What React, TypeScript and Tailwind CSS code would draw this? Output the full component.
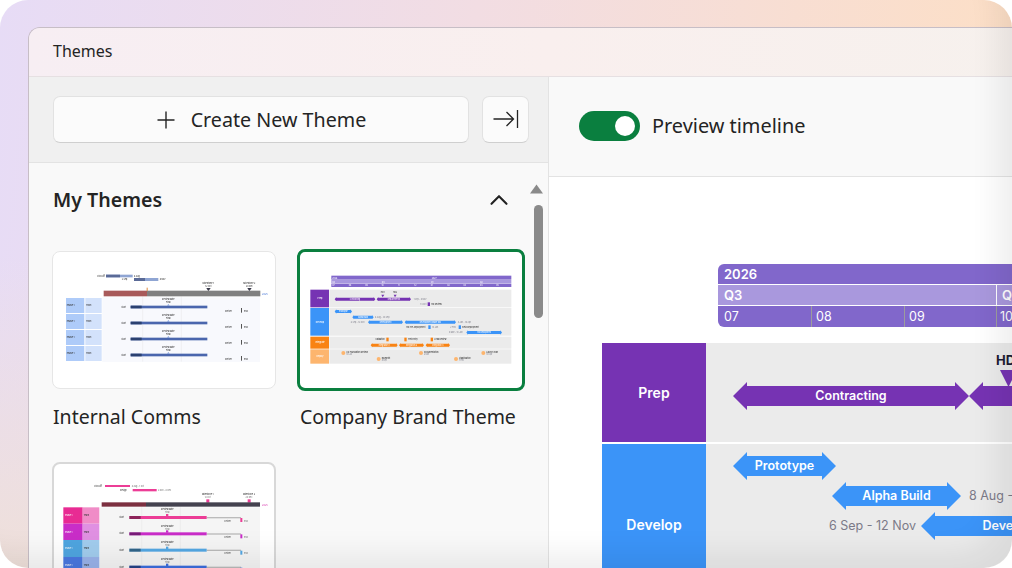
import React from "react";
import { ChevronUp } from "lucide-react";

const ui = "font-['Noto_Sans',sans-serif]";
const inter = "font-['Inter',sans-serif]";

function Arrow({ w, label, color }: { w: number; label: string; color: string }) {
  return (
    <div
      style={{ width: w }}
      className={`h-7 shrink-0 pt-px flex items-center justify-center text-white text-[12.5px] font-semibold whitespace-nowrap [clip-path:polygon(0_50%,14px_0,14px_4px,calc(100%-14px)_4px,calc(100%-14px)_0,100%_50%,calc(100%-14px)_100%,calc(100%-14px)_24px,14px_24px,14px_100%)] ${color}`}
    >
      {label}
    </div>
  );
}

function T({ x, y, s = 7, c = "#333", children, a }: { x: number; y: number; s?: number; c?: string; children: React.ReactNode; a?: "middle" | "start" | "end" }) {
  return (
    <text x={x} y={y} fontSize={s} fill={c} textAnchor={a} fontFamily="Inter, sans-serif" fontWeight={500}>
      {children}
    </text>
  );
}

function Thumb1() {
  const rows = [177, 225, 273, 321];
  return (
    <svg width="222" height="136" viewBox="39 39 666 408" className="block blur-[0.35px]">
      <rect x="187" y="175" width="473" height="194" fill="#f8f9fd" />
      <line x1="308" y1="172" x2="308" y2="368" stroke="#ddd" />
      <line x1="424" y1="172" x2="424" y2="368" stroke="#ddd" />
      <T x={172} y={114} s={6}>Kick-off</T>
      <rect x="198" y="107" width="80" height="8" fill="#8fa5d3" />
      <rect x="198" y="107" width="42" height="8" fill="#5a6a97" />
      <T x={282} y={114} s={6}>8 Aug</T>
      <T x={245} y={124} s={6}>2 Sep</T>
      <rect x="282" y="117" width="73" height="9" fill="#8fa5d3" />
      <rect x="282" y="117" width="33" height="9" fill="#5a6a97" />
      <T x={359} y={124} s={6}>8 Nov</T>
      <T x={505} y={134} s={6.5} a="middle">Milestone 1</T>
      <T x={505} y={143} s={6} a="middle">12 Oct</T>
      <T x={628} y={134} s={6.5} a="middle">Milestone 2</T>
      <T x={628} y={143} s={6} a="middle">20 Dec</T>
      <polygon points="499,147 512,147 505,157" fill="#3a3a4a" />
      <polygon points="622,147 635,147 628,157" fill="#3a3a4a" />
      <rect x="191" y="155" width="130" height="17" fill="#a85a5a" />
      <rect x="321" y="155" width="340" height="17" fill="#808080" />
      <rect x="320" y="146" width="3" height="10" fill="#e08a3c" />
      <T x={666} y={167} s={7} c="#4a78d8">2025</T>
      {rows.map((y) => (
        <g key={y}>
          <rect x="78" y={y} width="55" height={45} fill="#aecbf9" />
          <rect x="136" y={y} width="49" height={45} fill="#d3e2fb" />
          <T x={80} y={y + 24} s={6.5}>Phase 1</T>
          <T x={138} y={y + 24} s={6}>Team</T>
          <T x={385} y={y + 6} s={6.5} a="middle">Review date</T>
          <T x={385} y={y + 15} s={6} a="middle">Final</T>
          <T x={244} y={y + 29} s={6}>Start</T>
          <rect x="272" y={y + 23} width="230" height="8" fill="#4a66ad" />
          <rect x="272" y={y + 23} width="33" height="8" fill="#2b4170" />
          <polygon points={`${385},${y + 18} ${389},${y + 23} ${381},${y + 23}`} fill="#7f9bd8" />
          <T x={555} y={y + 41} s={6}>Deliver</T>
          <rect x="603" y={y + 30} width="3" height="14" fill="#555" />
          <T x={612} y={y + 41} s={6}>End</T>
        </g>
      ))}
    </svg>
  );
}

function MiniArrow({ x, y, w, h = 13, c, label }: { x: number; y: number; w: number; h?: number; c: string; label: string }) {
  const m = y + h / 2;
  return (
    <g>
      <polygon points={`${x},${m} ${x + 5},${y} ${x + 5},${y + 2} ${x + w - 5},${y + 2} ${x + w - 5},${y} ${x + w},${m} ${x + w - 5},${y + h} ${x + w - 5},${y + h - 2} ${x + 5},${y + h - 2} ${x + 5},${y + h}`} fill={c} />
      <T x={x + w / 2} y={m + 2} s={5.5} c="#fff" a="middle">{label}</T>
    </g>
  );
}

function Thumb2() {
  const purple = "#7633b3", blue = "#3b94f8", orange = "#f98313", peach = "#fdb56e", grey = "#8a8a95";
  return (
    <svg width="222" height="136" viewBox="29 37 666 408" className="block blur-[0.35px]">
      <rect x="123" y="108" width="540" height="12" fill="#8167cb" />
      <rect x="123" y="121" width="540" height="10" fill="#a898de" />
      <rect x="123" y="132" width="540" height="10" fill="#8167cb" />
      <T x={126} y={117} s={6} c="#fff">2026</T>
      <T x={424} y={117} s={6} c="#fff">2027</T>
      {[["Q3", 126], ["Q4", 274], ["Q1", 422], ["Q2", 569]].map(([l, x]) => (
        <T key={l as string} x={x as number} y={129} s={6} c="#fff">{l}</T>
      ))}
      {["07", "08", "09", "10", "11", "12", "01", "02", "03", "04", "05", "06"].map((m, i) => (
        <T key={i} x={126 + i * 49.2} y={140} s={6} c="#fff">{m}</T>
      ))}
      <rect x="117" y="150" width="546" height="53" fill="#ebebeb" />
      <rect x="117" y="205" width="546" height="83" fill="#ebebeb" />
      <rect x="117" y="291" width="546" height="36" fill="#ebebeb" />
      <rect x="117" y="329" width="546" height="43" fill="#ebebeb" />
      <rect x="60" y="150" width="56" height="53" fill={purple} />
      <rect x="60" y="205" width="56" height="83" fill={blue} />
      <rect x="60" y="291" width="56" height="36" fill={orange} />
      <rect x="60" y="329" width="56" height="43" fill={peach} />
      <T x={89} y={178} s={6.5} c="#fff" a="middle">Prep</T>
      <T x={89} y={249} s={6.5} c="#fff" a="middle">Develop</T>
      <T x={89} y={311} s={6.5} c="#fff" a="middle">Integrate</T>
      <T x={89} y={352} s={6.5} c="#fff" a="middle">Deploy</T>
      <MiniArrow x={133} y={172} w={122} c={purple} label="Contracting" />
      <MiniArrow x={259} y={172} w={103} c={purple} label="Requirements" />
      <T x={277} y={161} s={6} a="middle">HD1</T>
      <T x={314} y={161} s={6} a="middle">HD2</T>
      <polygon points="273,165 282,165 277,173" fill={purple} />
      <polygon points="310,165 319,165 314,173" fill={purple} />
      <T x={370} y={181} s={6} c={grey}>1 Sep - 8 Nov</T>
      <T x={390} y={195} s={6} c={grey}>14 Oct</T>
      <rect x="412" y="188" width="7" height="11" fill={purple} />
      <T x={423} y={195} s={6}>HD Review</T>
      <MiniArrow x={133} y={209} w={52} c={blue} label="Prototype" />
      <MiniArrow x={186} y={226} w={64} c={blue} label="Alpha Build" />
      <T x={254} y={234} s={6} c={grey}>8 Aug - 30 Sep</T>
      <T x={181} y={250} s={6} c={grey}>6 Sep - 12 Nov</T>
      <MiniArrow x={233} y={241} w={105} c={blue} label="Development" />
      <MiniArrow x={343} y={241} w={154} c={blue} label="Development phase two" />
      <T x={502} y={250} s={6} c={grey}>4 Jan - 18 Apr</T>
      <T x={348} y={265} s={6}>HD Pre-Deployment</T>
      <rect x="414" y="257" width="7" height="11" fill={blue} />
      <T x={425} y={265} s={6} c={grey}>14 Jan</T>
      <T x={480} y={265} s={6} c={grey}>2 Feb</T>
      <rect x="505" y="257" width="7" height="11" fill={blue} />
      <T x={516} y={265} s={6}>Beta Deployment</T>
      <T x={476} y={280} s={6} c={grey}>9 Mar - 10 Jun</T>
      <MiniArrow x={528} y={272} w={107} c={blue} label="HD Deployment" />
      <T x={255} y={302} s={6}>Validation</T>
      <rect x="288" y="294" width="7" height="11" fill={orange} />
      <rect x="342" y="294" width="7" height="11" fill={orange} />
      <T x={353} y={302} s={6}>Test Entry</T>
      <rect x="421" y="294" width="7" height="11" fill={orange} />
      <T x={432} y={302} s={6}>Lead Review</T>
      <MiniArrow x={241} y={310} w={81} c={orange} label="Integration 1" />
      <MiniArrow x={326} y={310} w={75} c={orange} label="Integration 2" />
      <MiniArrow x={406} y={310} w={73} c={orange} label="Integration 3" />
      {[[159, 340, "UX Foundation Review", "30 Jul"], [265, 358, "Blueprint", "8 Sep"], [392, 340, "Documentation", "2 Nov"], [497, 358, "Stabilisation", "7 Feb"], [579, 340, "Launch Plan", "30 Apr"]].map(([x, y, a, b]) => (
        <g key={a as string}>
          <circle cx={x as number} cy={y as number} r="6" fill={peach} />
          <T x={(x as number) + 9} y={(y as number) - 1} s={6}>{a}</T>
          <T x={(x as number) + 9} y={(y as number) + 7} s={5.5} c={grey}>{b}</T>
        </g>
      ))}
    </svg>
  );
}

function Thumb3() {
  const rows = [
    [172, 49, "#e82b93", "#f08cc7", "#ec3d96"],
    [221, 49, "#c92dc8", "#e090e2", "#c92dc8"],
    [270, 51, "#4fa5e0", "#a2cdee", "#54a8e4"],
    [321, 50, "#4a78e0", "#9ab3ea", "#3c6ede"],
  ] as const;
  return (
    <svg width="220" height="134" viewBox="42 42 660 402" className="block blur-[0.35px]">
      <rect x="180" y="172" width="480" height="200" fill="#f5f5f5" />
      <line x1="305" y1="170" x2="305" y2="372" stroke="#ddd" />
      <line x1="421" y1="170" x2="421" y2="372" stroke="#ddd" />
      <T x={163} y={111} s={6}>Kick-off</T>
      <rect x="195" y="105" width="75" height="6" fill="#ec3d96" />
      <T x={275} y={110} s={6} c="#777">8 Aug - 1 Oct</T>
      <T x={240} y={122} s={6}>Design</T>
      <rect x="278" y="117" width="72" height="7" fill="#ec3d96" />
      <T x={354} y={123} s={6} c="#777">2 Nov - 8 Dec</T>
      <T x={503} y={134} s={6.5} a="middle">Milestone 1</T>
      <T x={503} y={144} s={6} c="#777" a="middle">12 Oct</T>
      <T x={627} y={134} s={6.5} a="middle">Milestone 2</T>
      <T x={627} y={144} s={6} c="#777" a="middle">20 Dec</T>
      <rect x="499" y="148" width="9" height="10" fill="#ec3d96" />
      <rect x="623" y="148" width="9" height="10" fill="#ec3d96" />
      <rect x="185" y="157" width="133" height="13" fill="#7c3040" />
      <rect x="318" y="157" width="342" height="13" fill="#44424f" />
      <T x={666} y={167} s={7} c="#d93fb0">2025</T>
      {rows.map(([y, h, c1, c2, bar]) => (
        <g key={y}>
          <rect x="70" y={y} width="58" height={h} fill={c1} />
          <rect x="128" y={y} width="50" height={h} fill={c2} />
          <T x={75} y={y + 27} s={6} c="#fff">Phase 1</T>
          <T x={131} y={y + 27} s={6}>Team</T>
          <T x={382} y={y + 9} s={6.5} a="middle">Review date</T>
          <T x={382} y={y + 18} s={5.5} c="#777" a="middle">Final</T>
          <rect x="378" y={y + 20} width="7" height="7" fill={bar} />
          <T x={238} y={y + 32} s={6}>Start</T>
          <rect x="500" y={y + 29} width="103" height="4" fill="#bbb" />
          <rect x="268" y={y + 26} width="232" height="9" fill={bar} />
          <rect x="268" y={y + 26} width="34" height="9" fill="#000" opacity="0.4" />
          <T x={553} y={y + 43} s={6} c="#555">Deliver</T>
          <rect x="601" y={y + 32} width="6" height="12" fill={bar} />
          <T x={612} y={y + 43} s={6} c="#777">End</T>
        </g>
      ))}
    </svg>
  );
}

export default function App() {
  return (
    <div className={`w-[1012px] h-[568px] bg-white ${ui} text-[#242424]`}>
      <div className="relative w-full h-full overflow-hidden rounded-[28px] pt-[27px] pl-[28px] bg-[linear-gradient(180deg,transparent_45%,#efe0da),linear-gradient(95deg,#e7dcf6,#f2dde3_45%,#fddfc4)]">
        <div className="w-[1040px] h-[600px] rounded-tl-xl border-l border-t border-[#c7bec6] flex flex-col overflow-hidden">
          <div className="h-[49px] shrink-0 flex items-center pl-6 pb-[2px] text-base border-b border-[#e6e0e2] bg-[linear-gradient(90deg,#f7eef3,#f9efee_50%,#f6f1ed)]">
            Themes
          </div>
          <div className="flex-1 flex min-h-0">
            <div className="w-[520px] shrink-0 flex flex-col border-r border-[#e3e3e3] bg-[#f9f9f9]">
              <div className="h-[86px] shrink-0 bg-[#f0f0f0] border-b border-[#e3e3e3] flex items-center gap-[13px] pl-6 pb-px">
                <button className="w-[416px] h-[47px] rounded-[7px] border border-[#e2e2e2] border-b-[#cfcfcf] bg-[#fbfbfb] flex items-center justify-center gap-[15px] text-[19.7px] leading-none pt-px">
                  <svg width="20" height="20" viewBox="0 0 20 20" fill="none" stroke="#242424" strokeWidth="1.4">
                    <path d="M10 1.5v17M1.5 10h17" />
                  </svg>
                  Create New Theme
                </button>
                <button className="w-[47px] h-[47px] rounded-[7px] border border-[#e2e2e2] border-b-[#cfcfcf] bg-[#fbfbfb] flex items-center justify-center">
                  <svg width="26" height="20" viewBox="0 0 26 20" fill="none" stroke="#242424" strokeWidth="1.3">
                    <path d="M0.5 10h20M13.5 3l7 7-7 7M24.5 1v18" />
                  </svg>
                </button>
              </div>
              <div className="flex-1 flex min-h-0">
                <div className="w-[500px] shrink-0 pl-[23px] overflow-hidden">
                  <div className="h-[72px] flex items-center justify-between pl-px pt-[2px] pr-[15px]">
                    <span className="text-[19.6px] font-semibold">My Themes</span>
                    <ChevronUp size={30} strokeWidth={1.7} color="#242424" />
                  </div>
                  <div className="grid grid-cols-[224px_228px] gap-x-[21px] gap-y-[31px] items-start">
                    <div className="pt-4">
                      <div className="h-[138px] rounded-lg border border-[#e6e6e6] bg-white">
                        <Thumb1 />
                      </div>
                      <div className="mt-[14px] pl-px text-[19.5px] leading-7 whitespace-nowrap">Internal Comms</div>
                    </div>
                    <div className="pt-[14px]">
                      <div className="h-[142px] rounded-lg border-[3px] border-[#0a7f3f] bg-white">
                        <Thumb2 />
                      </div>
                      <div className="mt-[12px] pl-[3px] text-[19.5px] leading-7 whitespace-nowrap">Company Brand Theme</div>
                    </div>
                    <div>
                      <div className="h-[138px] rounded-lg border-2 border-[#d8d8d8] bg-white">
                        <Thumb3 />
                      </div>
                    </div>
                  </div>
                </div>
                <div className="w-[14px] shrink-0 flex flex-col items-start pt-[21px] gap-[11px]">
                  <svg className="ml-px" width="13" height="10" viewBox="0 0 13 10">
                    <path d="M6.5 0.5L13 9.5H0Z" fill="#8a8a8a" />
                  </svg>
                  <div className="ml-[5px] w-[9px] h-[113px] rounded-full bg-[#8a8a8a]" />
                </div>
              </div>
            </div>
            <div className="flex-1 min-w-0 flex flex-col bg-white">
              <div className="h-[100px] shrink-0 bg-[#f9f9f9] border-b border-[#e3e3e3] flex items-center gap-3 pl-[30px] pb-[2px] text-[19.9px]">
                <div className="w-[61px] h-[30px] rounded-full bg-[#0a7f3f] flex items-center justify-end pr-[5px]">
                  <div className="w-5 h-5 rounded-full bg-white" />
                </div>
                Preview timeline
              </div>
              <div className={`flex-1 pl-[53px] pt-[87px] ${inter}`}>
                <div className="ml-[116px] w-[400px] text-white">
                  <div className="h-5 bg-[#8167cb] rounded-tl-md pl-[6px] pt-px flex items-center text-[13px] font-semibold">2026</div>
                  <div className="h-5 mt-px bg-[#a998dd] flex text-[13px] font-semibold">
                    <div className="w-[278px] pl-[6px] pt-px flex items-center">Q3</div>
                    <div className="pl-[5px] pt-px border-l border-white flex items-center">Q4</div>
                  </div>
                  <div className="h-[21px] mt-px bg-[#8167cb] rounded-bl-md flex text-[12.5px] font-normal">
                    <div className="w-[93px] pl-[6px] pt-px flex items-center">07</div>
                    <div className="w-[93px] pl-[4px] pt-px border-l border-[#9c9c9c] flex items-center">08</div>
                    <div className="w-[92px] pl-[4px] pt-px border-l border-[#9c9c9c] flex items-center">09</div>
                    <div className="pl-[3px] pt-px border-l border-[#9c9c9c] flex items-center">10</div>
                  </div>
                </div>
                <div className="mt-4 w-[500px] h-[99px] flex relative">
                  <div className="w-[104px] shrink-0 bg-[#7633b3] text-white text-sm font-semibold flex items-center justify-center">Prep</div>
                  <div className="flex-1 min-w-0 bg-[#ebebeb] pt-[39px] pl-[27px] flex overflow-hidden">
                    <Arrow w={236} label="Contracting" color="bg-[#7633b3]" />
                    <Arrow w={199} label="" color="bg-[#7633b3]" />
                  </div>
                  <div className="absolute left-[394px] top-[8px] text-[13px] font-bold text-[#1d1b33]">HD</div>
                  <svg className="absolute left-[398px] top-[27px]" width="17" height="17" viewBox="0 0 17 17">
                    <path d="M0 0H17L8.5 17Z" fill="#7633b3" />
                  </svg>
                </div>
                <div className="mt-[2px] w-[600px] h-[162px] flex">
                  <div className="w-[104px] shrink-0 bg-[#3b94f8] text-white text-sm font-semibold flex items-center justify-center">Develop</div>
                  <div className="flex-1 min-w-0 bg-[#ebebeb] pt-[8px] flex flex-col gap-[2px] overflow-hidden">
                    <div className="pl-[27px]"><Arrow w={103} label="Prototype" color="bg-[#3b94f8]" /></div>
                    <div className="pl-[126px] flex items-center gap-2">
                      <Arrow w={129} label="Alpha Build" color="bg-[#3b94f8]" />
                      <span className="text-[12.5px] text-[#7c7a88] whitespace-nowrap">8 Aug - 30 Sep</span>
                    </div>
                    <div className="pl-[123px] flex items-center gap-2">
                      <span className="w-[84px] shrink-0 text-[12.5px] text-[#7c7a88] whitespace-nowrap">6 Sep - 12 Nov</span>
                      <Arrow w={203} label="Development" color="bg-[#3b94f8]" />
                    </div>
                  </div>
                </div>
              </div>
            </div>
          </div>
        </div>
        <div className="absolute inset-0 rounded-[28px] pointer-events-none shadow-[inset_-26px_-26px_30px_-12px_rgba(0,0,0,0.07)]" />
      </div>
    </div>
  );
}
